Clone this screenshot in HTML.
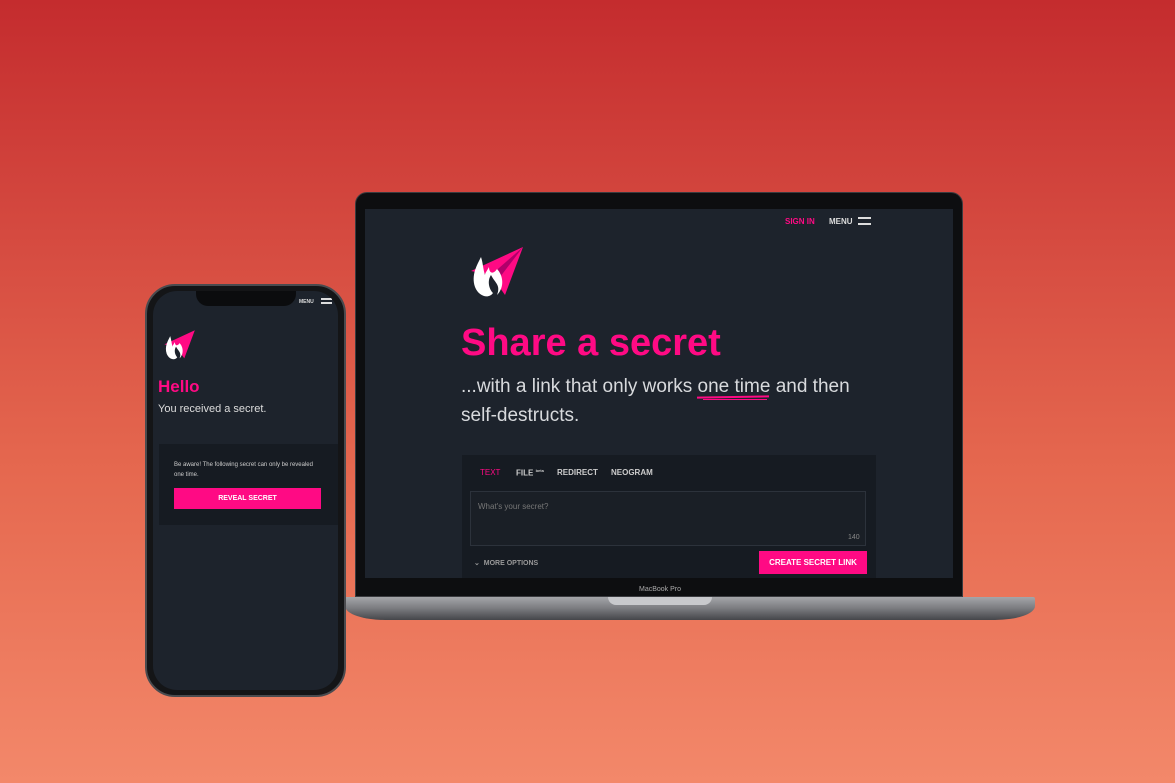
<!DOCTYPE html>
<html><head><meta charset="utf-8"><style>
*{margin:0;padding:0;box-sizing:border-box}
body{width:1175px;height:783px;overflow:hidden;position:relative;font-family:"Liberation Sans",sans-serif;
background:linear-gradient(180deg,#c42c2e 0%,#d54a40 30%,#e5684f 60%,#f3886a 100%)}
.a{position:absolute}
.pink{color:#ff0a84}
</style></head><body>
<!-- laptop -->
<div class="a" style="left:355px;top:192px;width:608px;height:405px;background:#0d0e10;border-radius:12px 12px 0 0;border:1px solid #3a3b3f"></div>
<div class="a" style="left:365px;top:209px;width:588px;height:369px;background:#1d232c;overflow:hidden">
  <div class="a pink" style="left:420px;top:8px;font-size:8px;font-weight:bold">SIGN IN</div>
  <div class="a" style="left:464px;top:8px;font-size:8px;font-weight:bold;color:#ddd">MENU</div>
  <div class="a" style="left:493px;top:8px;width:13px;height:2px;background:#ddd"></div>
  <div class="a" style="left:493px;top:14px;width:13px;height:2px;background:#ddd"></div>
  <svg class="a" style="left:102px;top:36px" width="58" height="56" viewBox="0 0 58 56"><polygon points="56,2 4,26 24,30 38,50" fill="#ff0a84"/><polygon points="56,2 24,30 30,36" fill="#b0006a"/><path d="M14,12 C10,20 4,30 8,42 C12,52 22,54 26,48 C22,44 20,36 24,30 C28,38 34,40 30,50 C38,42 36,30 30,24 C26,30 22,28 22,22 C20,26 18,28 18,30 C16,24 16,18 14,12Z" fill="#fff"/></svg>
  <div class="a pink" style="left:96px;top:113px;font-size:38px;font-weight:bold;letter-spacing:0px">Share a secret</div>
  <div class="a" style="left:96px;top:163px;font-size:19px;color:#d8dadd;line-height:29px;width:420px">...with a link that only works <span>one time</span> and then self-destructs.</div>
  <div class="a" style="left:332px;top:187px;width:72px;height:2px;background:#ff0a84;transform:rotate(-1deg)"></div>
  <div class="a" style="left:338px;top:190px;width:64px;height:1px;background:#ff0a84"></div>
  <div class="a" style="left:97px;top:246px;width:414px;height:130px;background:#161b22"></div>
  <div class="a pink" style="left:115px;top:259px;font-size:8px">TEXT</div>
  <div class="a" style="left:151px;top:259px;font-size:8px;color:#ccc;font-weight:bold">FILE <sup style="font-size:4px">beta</sup></div>
  <div class="a" style="left:192px;top:259px;font-size:8px;color:#ccc;font-weight:bold">REDIRECT</div>
  <div class="a" style="left:246px;top:259px;font-size:8px;color:#ccc;font-weight:bold">NEOGRAM</div>
  <div class="a" style="left:105px;top:282px;width:396px;height:55px;border:1px solid #2c323b;background:#1a1f26"></div>
  <div class="a" style="left:113px;top:293px;font-size:8px;color:#777">What's your secret?</div>
  <div class="a" style="left:483px;top:325px;font-size:7px;color:#888">140</div>
  <div class="a" style="left:109px;top:350px;font-size:7px;color:#999;font-weight:bold">⌄ &nbsp;MORE OPTIONS</div>
  <div class="a" style="left:394px;top:342px;width:108px;height:23px;background:#ff0a84;color:#fff;font-size:8px;font-weight:bold;text-align:center;line-height:23px">CREATE SECRET LINK</div>
</div>
<div class="a" style="left:625px;top:586px;font-size:7px;color:#aaa;width:70px;text-align:center">MacBook Pro</div>
<div class="a" style="left:345px;top:597px;width:690px;height:23px;background:linear-gradient(180deg,#a5a6aa,#7a7b7f 50%,#45464a);border-radius:2px 2px 40px 40px/2px 2px 14px 14px"></div>
<div class="a" style="left:608px;top:597px;width:104px;height:8px;background:#c8c9cc;border-radius:0 0 8px 8px"></div>
<!-- phone -->
<div class="a" style="left:145px;top:284px;width:201px;height:413px;background:#141517;border-radius:30px;border:2px solid #4a4b4f"></div>
<div class="a" style="left:153px;top:291px;width:185px;height:399px;background:#1d232c;border-radius:24px;overflow:hidden">
  <div class="a" style="left:43px;top:-2px;width:100px;height:17px;background:#0b0c0e;border-radius:0 0 12px 12px"></div>
  <div class="a" style="left:146px;top:8px;font-size:5px;color:#ddd;font-weight:bold">MENU</div>
  <div class="a" style="left:168px;top:7px;width:11px;height:1.5px;background:#ddd"></div>
  <div class="a" style="left:168px;top:11px;width:11px;height:1.5px;background:#ddd"></div>
  <svg class="a" style="left:9px;top:38px" width="34" height="33" viewBox="0 0 58 56"><polygon points="56,2 4,26 24,30 38,50" fill="#ff0a84"/><path d="M14,12 C10,20 4,30 8,42 C12,52 22,54 26,48 C22,44 20,36 24,30 C28,38 34,40 30,50 C38,42 36,30 30,24 C26,30 22,28 22,22 C20,26 18,28 18,30 C16,24 16,18 14,12Z" fill="#fff"/></svg>
  <div class="a pink" style="left:5px;top:86px;font-size:17px;font-weight:bold">Hello</div>
  <div class="a" style="left:5px;top:112px;font-size:11px;color:#ddd">You received a secret.</div>
  <div class="a" style="left:6px;top:153px;width:185px;height:81px;background:#161b22"></div>
  <div class="a" style="left:21px;top:169px;font-size:6px;color:#ccc;line-height:10px;width:140px">Be aware! The following secret can only be revealed one time.</div>
  <div class="a" style="left:21px;top:197px;width:147px;height:21px;background:#ff0a84;color:#fff;font-size:7px;font-weight:bold;text-align:center;line-height:21px">REVEAL SECRET</div>
</div>
</body></html>
